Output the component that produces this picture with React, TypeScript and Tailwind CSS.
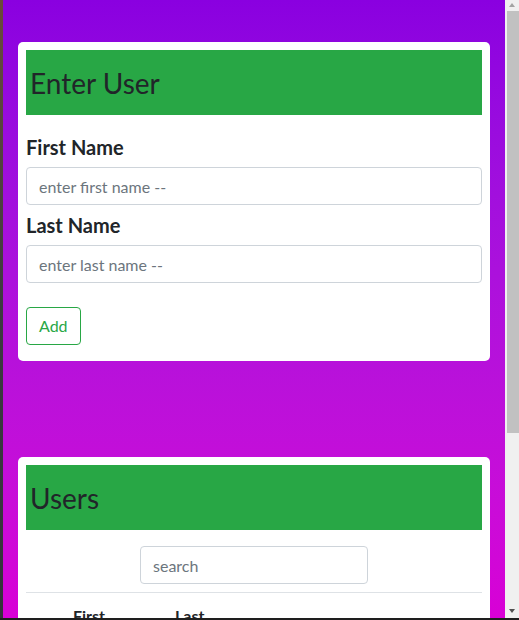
export default function App() {
  return (
    <div className="flex h-[620px] w-[519px] flex-col overflow-hidden bg-[#1f1f1f] font-['Lato','Liberation_Sans',sans-serif] text-[#212529]">
      <div className="flex min-h-0 flex-1">
        <div className="w-[3px] bg-gradient-to-b from-[#6b4a3a] via-[#3c3a40] to-[#34343a]" />
        <main className="flex-1 overflow-hidden bg-gradient-to-b from-[#8a00e0] to-[#d800d6] px-[15px] pt-[42px]">
          <section className="rounded-[5px] bg-white p-2 pb-4">
            <div className="flex h-[65px] items-center bg-[#28a745] px-[4px]">
              <h3 className="text-[28px] leading-[34px]">Enter User</h3>
            </div>
            <label className="mt-5 mb-2 block text-[20px] leading-6 font-bold">First Name</label>
            <input
              className="block h-[38px] w-full rounded-[4px] border border-[#ced4da] px-3 text-[16px] outline-none placeholder:text-[#6c757d]"
              placeholder="enter first name --"
            />
            <label className="mt-2 mb-2 block text-[20px] leading-6 font-bold">Last Name</label>
            <input
              className="block h-[38px] w-full rounded-[4px] border border-[#ced4da] px-3 text-[16px] outline-none placeholder:text-[#6c757d]"
              placeholder="enter last name --"
            />
            <button className="mt-6 h-[38px] rounded-[4px] border border-[#28a745] px-3 text-[16px] text-[#28a745]">
              Add
            </button>
          </section>

          <section className="mt-[96px] rounded-[5px] bg-white p-2">
            <div className="flex h-[65px] items-center bg-[#28a745] px-[4px]">
              <h3 className="text-[28px] leading-[34px]">Users</h3>
            </div>
            <input
              className="mx-auto mt-4 block h-[38px] w-[228px] rounded-[4px] border border-[#ced4da] px-3 text-[16px] outline-none placeholder:text-[#6c757d]"
              placeholder="search"
            />
            <div className="mt-2 border-t border-[#dee2e6]" />
            <div className="flex pt-[11px] text-[16px] leading-6 font-bold">
              <span className="w-[47px]" />
              <span className="w-[102px]">First</span>
              <span>Last</span>
            </div>
          </section>
        </main>
        <div className="flex w-[14px] flex-col bg-[#f0f0f0]">
          <svg width="14" height="11" viewBox="0 0 14 11" className="shrink-0">
            <path d="M4 7 L10 7 L7 3 Z" fill="#a3a3a3" />
          </svg>
          <div className="ml-[2px] h-[422px] w-[12px] bg-[#c1c1c1]" />
          <div className="flex-1" />
          <svg width="14" height="14" viewBox="0 0 14 14" className="shrink-0">
            <path d="M4 5 L10 5 L7 9 Z" fill="#505050" />
          </svg>
        </div>
      </div>
      <div className="h-[2px] bg-[#1e1e1e]" />
    </div>
  )
}
